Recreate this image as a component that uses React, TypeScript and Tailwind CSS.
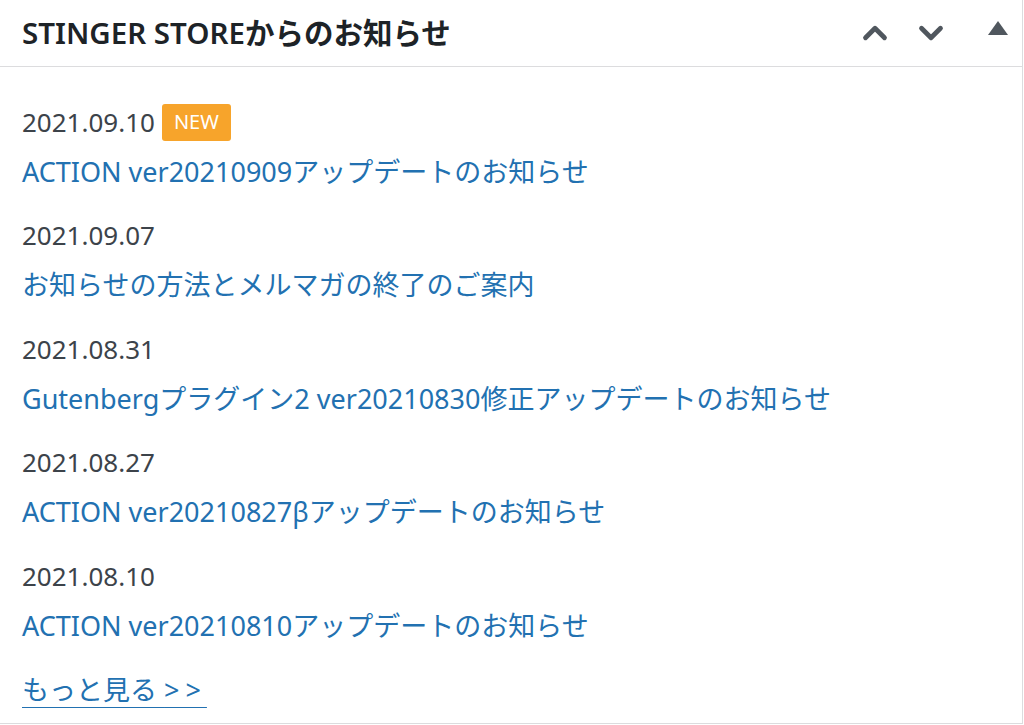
import { ChevronUp, ChevronDown } from "lucide-react";

interface NewsItem {
  date: string;
  title: string;
  isNew?: boolean;
}

const news: NewsItem[] = [
  { date: "2021.09.10", title: "ACTION ver20210909アップデートのお知らせ", isNew: true },
  { date: "2021.09.07", title: "お知らせの方法とメルマガの終了のご案内" },
  { date: "2021.08.31", title: "Gutenbergプラグイン2 ver20210830修正アップデートのお知らせ" },
  { date: "2021.08.27", title: "ACTION ver20210827βアップデートのお知らせ" },
  { date: "2021.08.10", title: "ACTION ver20210810アップデートのお知らせ" },
];

export default function App() {
  return (
    <div
      className="w-[1024px] h-[725px] bg-white overflow-hidden"
      style={{ fontFamily: '"Noto Sans", "Noto Sans CJK JP", sans-serif' }}
    >
      <div className="w-[1023px] h-[724px] border-r border-b border-[#dcdcde]">
        {/* Widget header */}
        <div className="h-[67px] flex items-center justify-between border-b border-[#dcdcde] pl-[22px] pr-[14px]">
          <h2 className="text-[29.5px] font-semibold text-[#1d2327]">
            STINGER STOREからのお知らせ
          </h2>
          <div className="flex items-center text-[#50575e]">
            <ChevronUp size={38} strokeWidth={3} className="mr-[18px]" />
            <ChevronDown size={38} strokeWidth={3} className="mr-[38px]" />
            <svg width="20" height="14" viewBox="0 0 20 14" className="mb-[10px]">
              <polygon points="10,0 20,14 0,14" fill="#50575e" />
            </svg>
          </div>
        </div>

        {/* News list */}
        <div className="pl-[22px] pt-[30px]">
          {news.map((item, i) => (
            <div key={i} className="mb-[13.5px]">
              <div className="h-[50px] flex items-center gap-[7px]">
                <span className="text-[26px] text-[#3c434a]">{item.date}</span>
                {item.isNew && (
                  <span className="h-[37px] px-[12px] flex items-center rounded-[3px] bg-[#f7a42b] text-white text-[20px]">
                    NEW
                  </span>
                )}
              </div>
              <div className="h-[50px] flex items-center">
                <a href="#" className="text-[27px] text-[#2271b1]">
                  {item.title}
                </a>
              </div>
            </div>
          ))}
          <div className="h-[50px] flex items-center mt-[14px]">
            <a href="#" className="text-[27px] text-[#2271b1] underline decoration-1 underline-offset-[7px]">
              もっと見る <span className="tracking-[6px]">&gt;&gt;</span>
            </a>
          </div>
        </div>
      </div>
    </div>
  );
}
